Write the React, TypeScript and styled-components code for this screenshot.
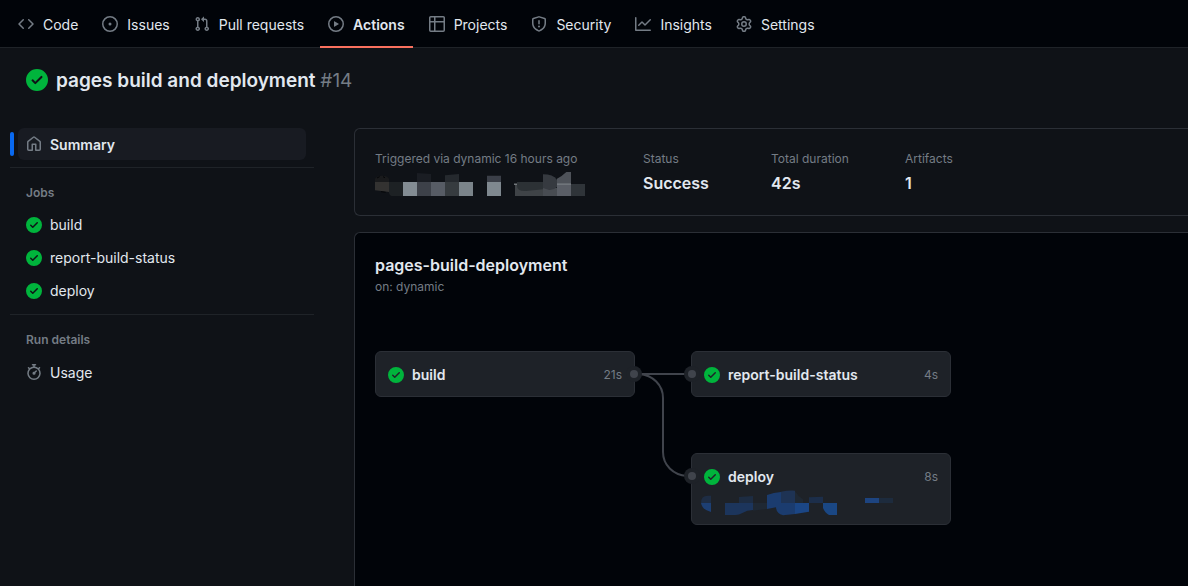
import React from "react";
import styled, { createGlobalStyle, css } from "styled-components";

const color = {
  page: "#0f1217",
  inset: "#010409",
  node: "#1e2228",
  active: "#181b22",
  border: "#2b2f36",
  borderMuted: "#1f2328",
  text: "#e2e8ef",
  muted: "#747c85",
  green: "#00b43c",
  line: "#40444c",
  accent: "#0969f0",
  tab: "#f9705e",
};

const GlobalStyle = createGlobalStyle`
  *, *::before, *::after { box-sizing: border-box; }
  body {
    margin: 0;
    background: ${color.page};
    color: ${color.text};
    font: 400 14px/20px Inter, "Liberation Sans", sans-serif;
  }
  h1, h2, h3, p, ul, dl, dd { margin: 0; padding: 0; }
  ul { list-style: none; }
  a { color: inherit; text-decoration: none; }
`;

const paths = {
  code: "m11.28 3.22 4.25 4.25a.75.75 0 0 1 0 1.06l-4.25 4.25a.749.749 0 0 1-1.275-.326.749.749 0 0 1 .215-.734L13.94 8l-3.72-3.72a.749.749 0 0 1 .326-1.275.749.749 0 0 1 .734.215Zm-6.56 0a.751.751 0 0 1 1.042.018.751.751 0 0 1 .018 1.042L2.06 8l3.72 3.72a.749.749 0 0 1-.326 1.275.749.749 0 0 1-.734-.215L.47 8.53a.75.75 0 0 1 0-1.06Z",
  issue: "M8 9.5a1.5 1.5 0 1 0 0-3 1.5 1.5 0 0 0 0 3ZM8 0a8 8 0 1 1 0 16A8 8 0 0 1 8 0ZM1.5 8a6.5 6.5 0 1 0 13 0 6.5 6.5 0 0 0-13 0Z",
  pull: "M1.5 3.25a2.25 2.25 0 1 1 3 2.122v5.256a2.251 2.251 0 1 1-1.5 0V5.372A2.25 2.25 0 0 1 1.5 3.25Zm5.677-.177L9.573.677A.25.25 0 0 1 10 .854V2.5h1A2.5 2.5 0 0 1 13.5 5v5.628a2.251 2.251 0 1 1-1.5 0V5a1 1 0 0 0-1-1h-1v1.646a.25.25 0 0 1-.427.177L7.177 3.427a.25.25 0 0 1 0-.354ZM3.75 2.5a.75.75 0 1 0 0 1.5.75.75 0 0 0 0-1.5Zm0 9.5a.75.75 0 1 0 0 1.5.75.75 0 0 0 0-1.5Zm8.25.75a.75.75 0 1 0 1.5 0 .75.75 0 0 0-1.5 0Z",
  play: "M8 0a8 8 0 1 1 0 16A8 8 0 0 1 8 0ZM1.5 8a6.5 6.5 0 1 0 13 0 6.5 6.5 0 0 0-13 0Zm4.879-2.773 4.264 2.559a.25.25 0 0 1 0 .428l-4.264 2.559A.25.25 0 0 1 6 10.559V5.442a.25.25 0 0 1 .379-.215Z",
  table: "M0 1.75C0 .784.784 0 1.75 0h12.5C15.216 0 16 .784 16 1.75v12.5A1.75 1.75 0 0 1 14.25 16H1.75A1.75 1.75 0 0 1 0 14.25ZM6.5 6.5v8h7.75a.25.25 0 0 0 .25-.25V6.5Zm8-1.5V1.75a.25.25 0 0 0-.25-.25H6.5V5Zm-13 1.5v7.75c0 .138.112.25.25.25H5v-8ZM5 5V1.5H1.75a.25.25 0 0 0-.25.25V5Z",
  shield: "M7.467.133a1.748 1.748 0 0 1 1.066 0l5.25 1.68A1.75 1.75 0 0 1 15 3.48V7c0 1.566-.32 3.182-1.303 4.682-.983 1.498-2.585 2.813-5.032 3.855a1.697 1.697 0 0 1-1.33 0c-2.447-1.042-4.049-2.357-5.032-3.855C1.32 10.182 1 8.566 1 7V3.48a1.755 1.755 0 0 1 1.217-1.667Zm.61 1.429a.25.25 0 0 0-.153 0l-5.25 1.68a.25.25 0 0 0-.174.238V7c0 1.358.275 2.666 1.057 3.86.784 1.194 2.121 2.34 4.366 3.297a.196.196 0 0 0 .154 0c2.245-.956 3.582-2.104 4.366-3.298C13.225 9.666 13.5 8.36 13.5 7V3.48a.251.251 0 0 0-.174-.237l-5.25-1.68ZM8.75 4.75v3a.75.75 0 0 1-1.5 0v-3a.75.75 0 0 1 1.5 0ZM9 10.5a1 1 0 1 1-2 0 1 1 0 0 1 2 0Z",
  graph: "M1.5 1.75V13.5h13.75a.75.75 0 0 1 0 1.5H.75a.75.75 0 0 1-.75-.75V1.75a.75.75 0 0 1 1.5 0Zm14.28 2.53-5.25 5.25a.75.75 0 0 1-1.06 0L7 7.06 4.28 9.78a.751.751 0 0 1-1.042-.018.751.751 0 0 1-.018-1.042l3.25-3.25a.75.75 0 0 1 1.06 0L10 7.94l4.72-4.72a.751.751 0 0 1 1.042.018.751.751 0 0 1 .018 1.042Z",
  gear: "M8 0a8.2 8.2 0 0 1 .701.031C9.444.095 9.99.645 10.16 1.29l.288 1.107c.018.066.079.158.212.224.231.114.454.243.668.386.123.082.233.09.299.071l1.103-.303c.644-.176 1.392.021 1.82.63.27.385.506.792.704 1.218.315.675.111 1.422-.364 1.891l-.814.806c-.049.048-.098.147-.088.294.016.257.016.515 0 .772-.01.147.038.246.088.294l.814.806c.475.469.679 1.216.364 1.891a7.977 7.977 0 0 1-.704 1.217c-.428.61-1.176.807-1.82.63l-1.102-.302c-.067-.019-.177-.011-.3.071a5.909 5.909 0 0 1-.668.386c-.133.066-.194.158-.211.224l-.29 1.106c-.168.646-.715 1.196-1.458 1.26a8.006 8.006 0 0 1-1.402 0c-.743-.064-1.289-.614-1.458-1.26l-.289-1.106c-.018-.066-.079-.158-.212-.224a5.738 5.738 0 0 1-.668-.386c-.123-.082-.233-.09-.299-.071l-1.103.303c-.644.176-1.392-.021-1.82-.63a8.12 8.12 0 0 1-.704-1.218c-.315-.675-.111-1.422.363-1.891l.815-.806c.05-.048.098-.147.088-.294a6.214 6.214 0 0 1 0-.772c.01-.147-.038-.246-.088-.294l-.815-.806C.635 6.045.431 5.298.746 4.623a7.92 7.92 0 0 1 .704-1.217c.428-.61 1.176-.807 1.82-.63l1.102.302c.067.019.177.011.3-.071.214-.143.437-.272.668-.386.133-.066.194-.158.211-.224l.29-1.106C6.009.645 6.556.095 7.299.03 7.53.01 7.764 0 8 0Zm-.571 1.525c-.036.003-.108.036-.137.146l-.289 1.105c-.147.561-.549.967-.998 1.189-.173.086-.34.183-.5.29-.417.278-.97.423-1.529.27l-1.103-.303c-.109-.03-.175.016-.195.045-.22.312-.412.644-.573.99-.014.031-.021.11.059.19l.815.806c.411.406.562.957.53 1.456a4.709 4.709 0 0 0 0 .582c.032.499-.119 1.05-.53 1.456l-.815.806c-.081.08-.073.159-.059.19.162.346.353.677.573.989.02.03.085.076.195.046l1.102-.303c.56-.153 1.113-.008 1.53.27.161.107.328.204.501.29.447.222.85.629.997 1.189l.289 1.105c.029.109.101.143.137.146a6.6 6.6 0 0 0 1.142 0c.036-.003.108-.036.137-.146l.289-1.105c.147-.561.549-.967.998-1.189.173-.086.34-.183.5-.29.417-.278.97-.423 1.529-.27l1.103.303c.109.029.175-.016.195-.045.22-.313.411-.644.573-.99.014-.031.021-.11-.059-.19l-.815-.806c-.411-.406-.562-.957-.53-1.456a4.709 4.709 0 0 0 0-.582c-.032-.499.119-1.05.53-1.456l.815-.806c.081-.08.073-.159.059-.19a6.464 6.464 0 0 0-.573-.989c-.02-.03-.085-.076-.195-.046l-1.102.303c-.56.153-1.113.008-1.53-.27a4.44 4.44 0 0 0-.501-.29c-.447-.222-.85-.629-.997-1.189l-.289-1.105c-.029-.11-.101-.143-.137-.146a6.6 6.6 0 0 0-1.142 0ZM11 8a3 3 0 1 1-6 0 3 3 0 0 1 6 0ZM9.5 8a1.5 1.5 0 1 0-3.001.001A1.5 1.5 0 0 0 9.5 8Z",
  home: "M6.906.664a1.749 1.749 0 0 1 2.187 0l5.25 4.2c.415.332.657.835.657 1.367v7.019A1.75 1.75 0 0 1 13.25 15h-3.5a.75.75 0 0 1-.75-.75V9H7v5.25a.75.75 0 0 1-.75.75h-3.5A1.75 1.75 0 0 1 1 13.25V6.23c0-.531.242-1.034.657-1.366l5.25-4.2Zm1.25 1.171a.25.25 0 0 0-.312 0l-5.25 4.2a.25.25 0 0 0-.094.196v7.019c0 .138.112.25.25.25H5.5V8.25a.75.75 0 0 1 .75-.75h3.5a.75.75 0 0 1 .75.75v5.25h2.75a.25.25 0 0 0 .25-.25V6.23a.25.25 0 0 0-.094-.195Z",
  stopwatch: "M5.75.75A.75.75 0 0 1 6.5 0h3a.75.75 0 0 1 0 1.5h-.75v1l-.001.041a6.724 6.724 0 0 1 3.464 1.435l.007-.006.75-.75a.749.749 0 0 1 1.275.326.749.749 0 0 1-.215.734l-.75.75-.006.007a6.75 6.75 0 1 1-10.548 0L2.72 5.03l-.75-.75a.751.751 0 0 1 .018-1.042.751.751 0 0 1 1.042-.018l.75.75.007.006A6.72 6.72 0 0 1 7.25 2.541V1.5H6.5a.75.75 0 0 1-.75-.75ZM8 14.5a5.25 5.25 0 1 0-.001-10.501A5.25 5.25 0 0 0 8 14.5Zm.389-6.7 1.33-1.33a.75.75 0 1 1 1.061 1.06L9.45 8.861A1.503 1.503 0 0 1 8 10.75a1.499 1.499 0 1 1 .389-2.95Z",
  check: "M8 16A8 8 0 1 0 8 0a8 8 0 0 0 0 16Zm3.78-9.72a.751.751 0 0 0-.018-1.042.751.751 0 0 0-1.042-.018L6.75 9.19 5.28 7.72a.751.751 0 0 0-1.042.018.751.751 0 0 0-.018 1.042l2 2a.75.75 0 0 0 1.06 0Z",
};

type IconName = keyof typeof paths;

const IconSvg = styled.svg<{ $tone: string }>`
  flex: none;
  display: block;
  fill: ${(p) => p.$tone};
`;

function Icon({ name, size = 16 }: { name: IconName; size?: number }) {
  return (
    <IconSvg
      $tone={name === "check" ? color.green : color.muted}
      width={size}
      height={size}
      viewBox="0 0 16 16"
      aria-hidden="true"
    >
      <path fillRule="evenodd" d={paths[name]} />
    </IconSvg>
  );
}

const Page = styled.div`
  display: flex;
  flex-direction: column;
  min-height: 100vh;
`;

const Label = styled.span`
  padding-top: 2px;
  line-height: 18px;
`;

const TabBar = styled.nav`
  display: flex;
  gap: 8px;
  height: 48px;
  padding: 0 10px;
  background: ${color.inset};
  border-bottom: 1px solid ${color.borderMuted};
`;

const Tab = styled.a<{ $active: boolean }>`
  display: flex;
  align-items: center;
  gap: 9px;
  height: 48px;
  padding: 2px 8px 0;
  border-bottom: 2px solid transparent;
  white-space: nowrap;
  ${(p) =>
    p.$active &&
    css`
      border-color: ${color.tab};
      font-weight: 600;
    `}
`;

const RunHeader = styled.header`
  display: flex;
  align-items: center;
  gap: 8px;
  padding: 16px 26px;
`;

const RunTitle = styled.h1`
  padding-top: 2px;
  font-size: 19px;
  line-height: 30px;
  font-weight: 600;
`;

const RunNumber = styled.span`
  color: ${color.muted};
  font-weight: 400;
`;

const Columns = styled.div`
  flex: 1;
  display: grid;
  grid-template-columns: 304px minmax(0, 1fr);
  gap: 40px;
  padding: 16px 0 0 10px;
`;

const Sidebar = styled.nav`
  display: flex;
  flex-direction: column;
`;

const Group = styled.section`
  & + & {
    margin-top: 7px;
    padding-top: 8px;
    border-top: 1px solid ${color.borderMuted};
  }
`;

const GroupTitle = styled.h2`
  padding: 8px 16px 7px;
  color: ${color.muted};
  font-size: 12px;
  line-height: 18px;
  font-weight: 600;
`;

const LinkList = styled.ul`
  display: grid;
  gap: 1px;
`;

const SideItem = styled.li<{ $active?: boolean }>`
  display: flex;
  align-items: center;
  ${(p) =>
    p.$active &&
    css`
      &::before {
        content: "";
        width: 4px;
        height: 24px;
        margin-right: -4px;
        border-radius: 6px;
        background: ${color.accent};
      }
    `}
`;

const SideLink = styled.a<{ $active?: boolean }>`
  flex: 1;
  display: flex;
  align-items: center;
  gap: 8px;
  margin: 0 8px;
  padding: 6px 8px;
  border-radius: 6px;
  ${(p) =>
    p.$active &&
    css`
      background: ${color.active};
      font-weight: 600;
    `}
`;

const Main = styled.main`
  display: flex;
  flex-direction: column;
  gap: 16px;
`;

const Panel = styled.section`
  padding: 19px 20px;
  border: 1px solid ${color.border};
  border-right: 0;
  border-radius: 6px 0 0 6px;
`;

const Stats = styled.dl`
  display: grid;
  grid-template-columns: 212px 72px 78px auto;
  justify-content: start;
  gap: 56px;
`;

const StatLabel = styled.dt`
  padding-top: 2px;
  color: ${color.muted};
  font-size: 12px;
  line-height: 18px;
  white-space: nowrap;
`;

const StatValue = styled.dd`
  padding-top: 4px;
  font-size: 16px;
  line-height: 22px;
  font-weight: 600;
`;

const Mosaic = styled.svg`
  display: block;
  overflow: visible;
`;

const GraphPanel = styled(Panel)`
  flex: 1;
  padding: 20px;
  border-bottom: 0;
  border-radius: 6px 0 0 0;
  background: ${color.inset};
`;

const GraphTitle = styled.h2`
  font-size: 16px;
  line-height: 24px;
  font-weight: 600;
`;

const GraphTrigger = styled.p`
  color: ${color.muted};
  font-size: 12px;
  line-height: 20px;
`;

const Graph = styled.div`
  position: relative;
  display: grid;
  grid-template-columns: 260px 260px;
  gap: 56px;
  align-items: start;
  margin-top: 54px;
`;

const Stage = styled.div`
  display: grid;
  gap: 56px;
`;

const Node = styled.a`
  display: block;
  padding: 13px 12px 11px;
  border: 1px solid ${color.border};
  border-radius: 6px;
  background: ${color.node};
`;

const NodeHead = styled.span`
  display: flex;
  align-items: center;
  gap: 8px;
  font-weight: 600;
`;

const NodeTime = styled.span`
  margin-left: auto;
  color: ${color.muted};
  font-size: 12px;
  font-weight: 400;
`;

const NodeNote = styled.span`
  display: block;
  height: 26px;
  margin-left: -4px;
`;

const Wires = styled.svg`
  position: absolute;
  inset: 0;
  overflow: visible;
  pointer-events: none;
`;

const tabs: { icon: IconName; label: string }[] = [
  { icon: "code", label: "Code" },
  { icon: "issue", label: "Issues" },
  { icon: "pull", label: "Pull requests" },
  { icon: "play", label: "Actions" },
  { icon: "table", label: "Projects" },
  { icon: "shield", label: "Security" },
  { icon: "graph", label: "Insights" },
  { icon: "gear", label: "Settings" },
];

const jobs = ["build", "report-build-status", "deploy"];

const ports = [
  [259, 23],
  [317, 23],
  [317, 125],
];

function SideEntry({ icon, label, active }: { icon: IconName; label: string; active?: boolean }) {
  return (
    <SideItem $active={active}>
      <SideLink href="#" $active={active} aria-current={active ? "page" : undefined}>
        <Icon name={icon} />
        {icon === "check" ? label : <Label>{label}</Label>}
      </SideLink>
    </SideItem>
  );
}

function JobNode({ name, time, children }: { name: string; time: string; children?: React.ReactNode }) {
  return (
    <Node href="#">
      <NodeHead>
        <Icon name="check" />
        {name}
        <NodeTime>{time}</NodeTime>
      </NodeHead>
      {children}
    </Node>
  );
}

function ActorMosaic() {
  return (
    <Mosaic width="210" height="24" viewBox="15 12 630 72" aria-hidden="true">
      <path fill="#191a1c" d="M15 42V32q6-9 21-9t21 9v10z" />
      <path fill="#333231" d="M15 42h42v30l-18-2-24-3z" />
      <path fill="none" stroke="#050608" strokeWidth="3" d="M21 30l8-4m10 0l6 3M33 71l14 2" />
      <path fill="#1d2124" d="M57 42h42v42H68q-9 0-11-10z" />
      <path fill="#838c93" d="M99 42h42v42H99z" />
      <path fill="#1a1d23" d="M141 15l42 3v24h-42z" />
      <path fill="#3d4149" d="M141 42h42v42h-42z" />
      <path fill="#575c65" d="M183 42h42v42h-42z" />
      <path fill="#25292e" d="M225 22l42-4v24h-42z" />
      <path fill="#363b3f" d="M225 42h42v42h-42z" />
      <path fill="#7b848a" d="M267 42h42v42h-42z" />
      <path fill="#1a1d22" d="M351 21h42v4h-42z" />
      <path fill="#3b3f48" d="M351 24h42v18h-42z" />
      <path fill="#7f888f" d="M351 42h42v42h-42z" />
      <path fill="#3f4347" d="M435 50h84v34h-84z" />
      <path fill="#2c3135" d="M441 42h78v22l-50 5q-28 2-28-16z" />
      <path fill="#a0a6aa" d="M432 47h9v3h-9z" />
      <path fill="#484c52" d="M519 60h42v24h-42z" />
      <path fill="#363a40" d="M519 19q30 0 42 16v22q-10 10-24 9l-18-6z" />
      <path fill="#4e5259" d="M561 32q16-8 28-20h14v38h-42z" />
      <path fill="#70757b" d="M561 46h42v5h-42z" />
      <path fill="#5a5e66" d="M561 51h42v33h-42z" />
      <path fill="#2f3439" d="M603 48h42v36h-42z" />
    </Mosaic>
  );
}

function UrlMosaic() {
  return (
    <Mosaic width="194" height="26" viewBox="330 441 582 78" aria-hidden="true">
      <path fill="#1e2d44" d="M333 489q0-22 20-22h10v22z" />
      <path fill="#1d3f73" d="M333 489h30v27q-26-6-30-27z" />
      <path fill="#1d2c42" d="M447 471l42-3v21h-42z" />
      <path fill="#1c355c" d="M405 489h84v21q-18 0-32 9-10 6-20 6h-32z" />
      <path fill="#1f2833" d="M489 489h42v18l-42 5z" />
      <path fill="#1b3c6f" d="M531 465q20-7 42-9v45q-8-2-15 1l-27 5z" />
      <path fill="#1e3354" d="M573 455q20-4 42-3v37h-42z" />
      <path fill="#1f2833" d="M615 454q8 14 24 24v11h-24z" />
      <path fill="#1b3c6f" d="M558 489h57v33l-36 4q-21-6-21-26z" />
      <path fill="#1b4685" d="M615 489h42v26l-42 7z" />
      <path fill="#1c2e4a" d="M657 472l42-2v19h-42z" />
      <path fill="#1a4784" d="M699 489h42v36h-24q-12-6-18-21z" />
      <path fill="#1d4480" d="M825 474h42v15h-42z" />
      <path fill="#1d2b3d" d="M867 474h42v15h-42z" />
    </Mosaic>
  );
}

export default function App() {
  return (
    <Page>
      <GlobalStyle />
      <TabBar aria-label="Repository">
        {tabs.map((t) => (
          <Tab key={t.label} href="#" $active={t.label === "Actions"}>
            <Icon name={t.icon} />
            <Label>{t.label}</Label>
          </Tab>
        ))}
      </TabBar>

      <RunHeader>
        <Icon name="check" size={22} />
        <RunTitle>
          pages build and deployment <RunNumber>#14</RunNumber>
        </RunTitle>
      </RunHeader>

      <Columns>
        <Sidebar aria-label="Workflow run">
          <Group>
            <LinkList>
              <SideEntry icon="home" label="Summary" active />
            </LinkList>
          </Group>
          <Group>
            <GroupTitle>Jobs</GroupTitle>
            <LinkList>
              {jobs.map((job) => (
                <SideEntry key={job} icon="check" label={job} />
              ))}
            </LinkList>
          </Group>
          <Group>
            <GroupTitle>Run details</GroupTitle>
            <LinkList>
              <SideEntry icon="stopwatch" label="Usage" />
            </LinkList>
          </Group>
        </Sidebar>

        <Main>
          <Panel>
            <Stats>
              <div>
                <StatLabel>Triggered via dynamic 16 hours ago</StatLabel>
                <StatValue>
                  <ActorMosaic />
                </StatValue>
              </div>
              <div>
                <StatLabel>Status</StatLabel>
                <StatValue>Success</StatValue>
              </div>
              <div>
                <StatLabel>Total duration</StatLabel>
                <StatValue>42s</StatValue>
              </div>
              <div>
                <StatLabel>Artifacts</StatLabel>
                <StatValue>1</StatValue>
              </div>
            </Stats>
          </Panel>

          <GraphPanel>
            <GraphTitle>pages-build-deployment</GraphTitle>
            <GraphTrigger>on: dynamic</GraphTrigger>
            <Graph>
              <Stage>
                <JobNode name="build" time="21s" />
              </Stage>
              <Stage>
                <JobNode name="report-build-status" time="4s" />
                <JobNode name="deploy" time="8s">
                  <NodeNote>
                    <UrlMosaic />
                  </NodeNote>
                </JobNode>
              </Stage>
              <Wires width="576" height="174" aria-hidden="true">
                <g fill="none" stroke={color.line} strokeWidth="2">
                  <path d="M264 23H312" />
                  <path d="M264 23C278 24 288 34 288 47V101C288 114 298 124 312 125" />
                </g>
                {ports.map(([x, y]) => (
                  <g key={`${x}-${y}`}>
                    <circle cx={x} cy={y} r="8" fill={color.node} />
                    <circle cx={x} cy={y} r="4" fill={color.line} />
                  </g>
                ))}
              </Wires>
            </Graph>
          </GraphPanel>
        </Main>
      </Columns>
    </Page>
  );
}
